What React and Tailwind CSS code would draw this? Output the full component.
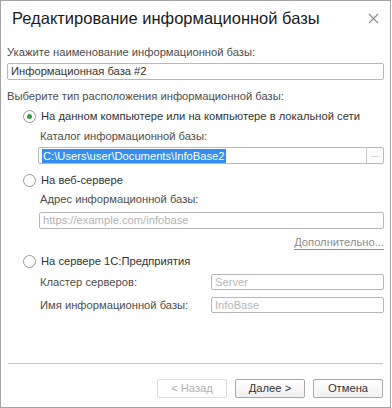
import React from "react";

const Radio = ({ checked, label }) => (
    <div className="flex h-[15px] items-center pl-[16px]">
        <span className="flex h-[13px] w-[13px] items-center justify-center rounded-full border border-[#9a9a9a] bg-white">
            {checked && <span className="h-[5px] w-[5px] rounded-full bg-[#3aa046]" />}
        </span>
        <span className="ml-[5px] text-[#333333]">{label}</span>
    </div>
);

const Field = ({ children, className = "" }) => (
    <div className={`flex items-center rounded-[2px] border border-[#b8b8b8] bg-white ${className}`}>
        {children}
    </div>
);

const Button = ({ children, disabled }) => (
    <button
        className={`h-[19px] w-[70px] rounded-[2px] border text-[11.2px] ${
            disabled
                ? "border-[#dcdcdc] bg-white text-[#b0b0b0]"
                : "border-[#a9a9a9] bg-gradient-to-b from-white to-[#f0f0f0] text-[#333333]"
        }`}
    >
        {children}
    </button>
);

export default function App() {
    return (
        <div
            className="flex h-[408px] w-[391px] flex-col border border-[#a3a3a3] bg-white text-[11.2px] leading-[15px] text-[#4d4d4d]"
            style={{ fontFamily: '"Liberation Sans", Arial, sans-serif' }}
        >
            {/* header */}
            <div className="flex h-[35px] items-center justify-between pl-[11px] pr-[11px]">
                <span className="text-[16.5px] text-[#1a1a1a]">Редактирование информационной базы</span>
                <svg width="11" height="11" viewBox="0 0 11 11" className="mt-[-1px]">
                    <path d="M1 1 L10 10 M10 1 L1 10" stroke="#8a8a8a" strokeWidth="1.1" />
                </svg>
            </div>

            <div className="flex-1 px-[6px]">
                <div className="mt-[9px] h-[15px]">Укажите наименование информационной базы:</div>
                <Field className="mt-[3px] h-[17px] pl-[3px] text-[#333333]">Информационная база #2</Field>

                <div className="mt-[9px] h-[15px]">Выберите тип расположения информационной базы:</div>
                <div className="mt-[5px]">
                    <Radio checked label="На данном компьютере или на компьютере в локальной сети" />
                </div>
                <div className="mt-[5px] h-[15px] pl-[33px]">Каталог информационной базы:</div>
                <div className="mt-[3px] pl-[31px]">
                    <Field className="h-[17px] justify-between">
                        <span className="ml-[3px] bg-[#3390f0] px-[1px] leading-[14px] text-white">
                            C:\Users\user\Documents\InfoBase2
                        </span>
                        <span className="flex h-full w-[17px] items-start justify-center border-l border-[#c8c8c8] text-[9px] leading-[13px] text-[#888888]">
                            ...
                        </span>
                    </Field>
                </div>

                <div className="mt-[9px]">
                    <Radio label="На веб-сервере" />
                </div>
                <div className="mt-[4px] h-[15px] pl-[33px]">Адрес информационной базы:</div>
                <div className="mt-[5px] pl-[32px]">
                    <Field className="h-[17px] pl-[3px] text-[#b3b3b3]">https://example.com/infobase</Field>
                </div>
                <div className="mt-[6px] flex h-[15px] justify-end">
                    <span className="text-[#8c8c8c] underline underline-offset-[3px]">Дополнительно...</span>
                </div>

                <div className="mt-[4px]">
                    <Radio label="На сервере 1С:Предприятия" />
                </div>
                <div className="mt-[5px] flex h-[16px] items-center pl-[33px]">
                    <span className="w-[171px]">Кластер серверов:</span>
                    <Field className="h-[16px] flex-1 pl-[3px] text-[#b8b8b8]">Server</Field>
                </div>
                <div className="mt-[7px] flex h-[16px] items-center pl-[33px]">
                    <span className="w-[171px]">Имя информационной базы:</span>
                    <Field className="h-[16px] flex-1 pl-[3px] text-[#b8b8b8]">InfoBase</Field>
                </div>
            </div>

            {/* footer */}
            <div className="mx-[7px] border-t border-[#c9c9c9] pb-[9px] pt-[15px]">
                <div className="flex justify-end gap-[8px]">
                    <Button disabled>&lt; Назад</Button>
                    <Button>Далее &gt;</Button>
                    <Button>Отмена</Button>
                </div>
            </div>
        </div>
    );
}
